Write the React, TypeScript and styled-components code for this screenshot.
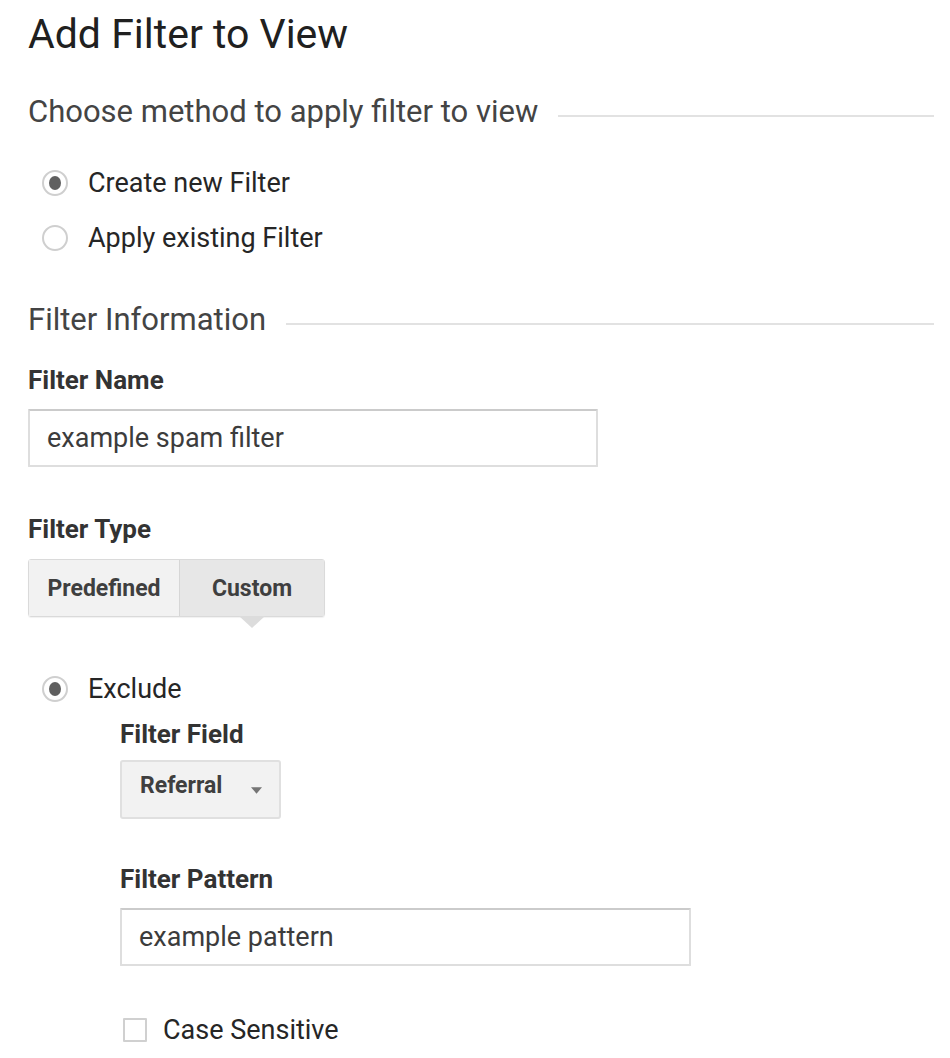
import styled, { createGlobalStyle } from 'styled-components'

const GlobalStyle = createGlobalStyle`
    html, body {
        margin: 0;
        padding: 0;
        background: #ffffff;
    }
    body {
        font-family: Roboto, 'Liberation Sans', Arial, sans-serif;
        color: #333333;
    }
`

export default function App(): JSX.Element {
    return (
        <Page>
            <GlobalStyle />
            <Title>Add Filter to View</Title>

            <SectionHeader $top={37}>
                <SectionText>Choose method to apply filter to view</SectionText>
                <SectionLine />
            </SectionHeader>

            <RadioList>
                <RadioRow>
                    <Radio $checked />
                    <OptionText>Create new Filter</OptionText>
                </RadioRow>
                <RadioRow>
                    <Radio />
                    <OptionText>Apply existing Filter</OptionText>
                </RadioRow>
            </RadioList>

            <SectionHeader $top={45}>
                <SectionText>Filter Information</SectionText>
                <SectionLine />
            </SectionHeader>

            <FieldLabel $top={29}>Filter Name</FieldLabel>
            <TextInput $width={570} defaultValue="example spam filter" readOnly />

            <FieldLabel $top={48}>Filter Type</FieldLabel>
            <ButtonGroup>
                <ToggleButton $width={150}>Predefined</ToggleButton>
                <ToggleButton $width={145} $active>
                    Custom
                </ToggleButton>
            </ButtonGroup>

            <RadioRow $top={52}>
                <Radio $checked />
                <OptionText>Exclude</OptionText>
            </RadioRow>

            <Nested>
                <FieldLabel $top={11}>Filter Field</FieldLabel>
                <Dropdown>
                    Referral
                    <Caret viewBox="0 0 12 7">
                        <path d="M0 0 L12 0 L6 7 Z" fill="#757575" />
                    </Caret>
                </Dropdown>

                <FieldLabel $top={46}>Filter Pattern</FieldLabel>
                <TextInput $width={571} defaultValue="example pattern" readOnly />

                <CheckRow>
                    <Checkbox />
                    <OptionText>Case Sensitive</OptionText>
                </CheckRow>
            </Nested>
        </Page>
    )
}

const Page = styled.div`
    padding: 10px 16px 16px 28px;
    display: flex;
    flex-direction: column;
    align-items: flex-start;
`

const Title = styled.h1`
    margin: 0;
    font-size: 41px;
    line-height: 48px;
    font-weight: 400;
    color: #202020;
`

const SectionHeader = styled.div<{ $top: number }>`
    align-self: stretch;
    display: flex;
    align-items: center;
    gap: 20px;
    margin-top: ${(p) => p.$top}px;
`

const SectionText = styled.div`
    font-size: 31px;
    line-height: 34px;
    color: #444444;
    white-space: nowrap;
`

const SectionLine = styled.div`
    flex: 1;
    height: 2px;
    margin-top: 8px;
    background: #e2e2e2;
`

const RadioList = styled.div`
    display: flex;
    flex-direction: column;
    gap: 15px;
    margin-top: 34px;
`

const RadioRow = styled.div<{ $top?: number }>`
    display: flex;
    align-items: center;
    gap: 20px;
    height: 40px;
    padding-left: 14px;
    margin-top: ${(p) => p.$top ?? 0}px;
`

const Radio = styled.span<{ $checked?: boolean }>`
    box-sizing: border-box;
    width: 26px;
    height: 26px;
    border-radius: 50%;
    border: 2px solid #cfcfcf;
    display: flex;
    align-items: center;
    justify-content: center;
    flex-shrink: 0;
    &::after {
        content: '';
        display: ${(p) => (p.$checked ? 'block' : 'none')};
        width: 12px;
        height: 14px;
        border-radius: 50%;
        background: #5f5f5f;
    }
`

const OptionText = styled.span`
    font-size: 27px;
    color: #262626;
`

const FieldLabel = styled.div<{ $top: number }>`
    font-size: 26px;
    line-height: 28px;
    font-weight: 700;
    color: #333333;
    margin-top: ${(p) => p.$top}px;
`

const TextInput = styled.input<{ $width: number }>`
    box-sizing: border-box;
    width: ${(p) => p.$width}px;
    height: 58px;
    margin-top: 15px;
    padding: 0 17px;
    border: 2px solid #dedede;
    border-top-color: #cbcbcb;
    border-radius: 1px;
    font-family: inherit;
    font-size: 27px;
    color: #3c3c3c;
    background: #ffffff;
    outline: none;
`

const ButtonGroup = styled.div`
    display: flex;
    margin-top: 16px;
    border: 1px solid #dadada;
    border-radius: 3px;
    box-shadow: 0 1px 1px rgba(0, 0, 0, 0.06);
`

const ToggleButton = styled.div<{ $width: number; $active?: boolean }>`
    position: relative;
    box-sizing: border-box;
    width: ${(p) => p.$width}px;
    height: 56px;
    display: flex;
    align-items: center;
    justify-content: center;
    font-size: 23px;
    font-weight: 700;
    color: #3f3f3f;
    background: ${(p) => (p.$active ? '#e7e7e7' : '#f2f2f2')};
    & + & {
        border-left: 1px solid #d6d6d6;
    }
    &::after {
        content: '';
        display: ${(p) => (p.$active ? 'block' : 'none')};
        position: absolute;
        left: 50%;
        top: 100%;
        margin-left: -13px;
        border-left: 13px solid transparent;
        border-right: 13px solid transparent;
        border-top: 12px solid #dcdcdc;
    }
`

const Nested = styled.div`
    display: flex;
    flex-direction: column;
    align-items: flex-start;
    padding-left: 92px;
`

const Dropdown = styled.div`
    box-sizing: border-box;
    width: 161px;
    height: 59px;
    margin-top: 12px;
    padding: 0 17px 8px 18px;
    display: flex;
    align-items: center;
    justify-content: space-between;
    background: #f2f2f2;
    border: 2px solid #e0e0e0;
    border-radius: 3px;
    font-size: 23px;
    font-weight: 700;
    color: #3f3f3f;
`

const Caret = styled.svg`
    width: 11px;
    height: 7px;
    margin-top: 10px;
`

const CheckRow = styled.div`
    display: flex;
    align-items: center;
    gap: 16px;
    height: 40px;
    margin-top: 44px;
    padding-left: 3px;
`

const Checkbox = styled.span`
    box-sizing: border-box;
    width: 24px;
    height: 24px;
    border: 2px solid #d0d0d0;
    border-radius: 1px;
    flex-shrink: 0;
`
